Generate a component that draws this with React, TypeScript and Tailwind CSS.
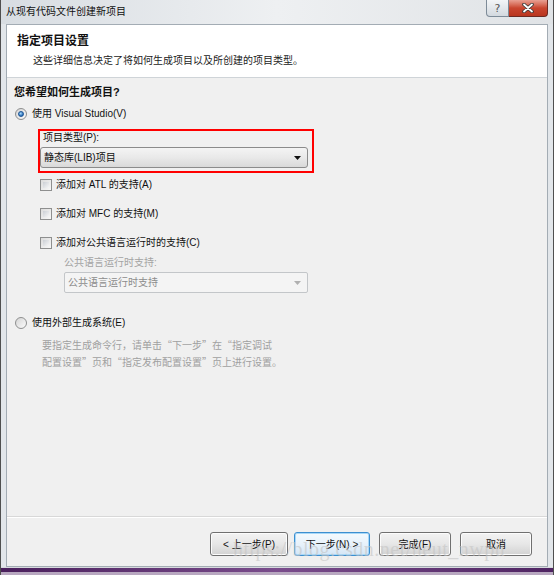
import React from "react";

const font = "font-['Liberation_Sans','Noto_Sans_CJK_SC',sans-serif]";

function Radio({ checked }: { checked?: boolean }) {
  return (
    <span className="w-[12px] h-[12px] rounded-full border border-[#8e8f8f] bg-gradient-to-br from-[#d5d5d5] to-[#fbfbfb] flex items-center justify-center shrink-0">
      {checked && (
        <span className="w-[6px] h-[6px] rounded-full bg-[radial-gradient(circle_at_40%_35%,#a9dcff,#2a6db5_70%)] border border-[#1c5595]" />
      )}
    </span>
  );
}

function Check() {
  return (
    <span className="w-[12px] h-[12px] border border-[#8e8f8f] bg-gradient-to-br from-[#dcdcdc] to-[#f8f8f8] p-[2px] shrink-0">
      <span className="block w-full h-full bg-gradient-to-br from-[#cbcfd5] to-[#f6f6f6]" />
    </span>
  );
}

function Arrow({ color }: { color: string }) {
  return (
    <svg width="7" height="4" viewBox="0 0 7 4">
      <path d="M0 0h7L3.5 4z" fill={color} />
    </svg>
  );
}

function Btn({ w, label, focus }: { w: string; label: string; focus?: boolean }) {
  return (
    <div
      className={`${w} h-[24px] rounded-[3px] border flex items-center justify-center text-[10px] text-[#111] ${
        focus
          ? "border-[#3c8fd0] bg-gradient-to-b from-[#f4fafe] via-[#e8f2fb] to-[#d4e6f6] shadow-[inset_0_0_0_1px_#a8d8f8]"
          : "border-[#707070] bg-gradient-to-b from-[#f3f3f3] via-[#e7e7e7] to-[#d2d2d2] shadow-[inset_0_0_0_1px_#fcfcfc]"
      }`}
    >
      {label}
    </div>
  );
}

export default function App() {
  return (
    <div className={`w-[554px] h-[575px] relative overflow-hidden flex flex-col bg-[#e2e6ea] border-l border-r border-[#4f4f4f] ${font}`}>
      {/* title bar */}
      <div className="h-[24px] flex items-start justify-between pl-[5px] pr-[5px] bg-gradient-to-r from-[#d8dde2] via-[#eef0f2] to-[#e0e3e6]">
        <span className="mt-[5px] text-[10px] leading-[14px] text-[#111]">从现有代码文件创建新项目</span>
        <div className="flex">
          <div className="w-[23px] h-[17px] rounded-bl-[4px] border border-t-0 border-[#7d8b98] bg-gradient-to-b from-[#f3f5f7] to-[#d3d9df] flex items-center justify-center text-[11px] leading-none text-[#555] font-['DejaVu_Sans',sans-serif]">
            ?
          </div>
          <div className="w-[39px] h-[17px] rounded-br-[4px] border border-t-0 border-l-0 border-[#6d2a22] bg-gradient-to-b from-[#e8a093] via-[#c9452f] to-[#b9361f] flex items-center justify-center">
            <svg width="12" height="10" viewBox="0 0 12 10">
              <path d="M2 1.5l8 7M10 1.5l-8 7" stroke="#3b3b3b" strokeWidth="3.6" strokeLinecap="round" />
              <path d="M2 1.5l8 7M10 1.5l-8 7" stroke="#fff" strokeWidth="1.8" strokeLinecap="round" />
            </svg>
          </div>
        </div>
      </div>

      {/* client area */}
      <div className="flex-1 mx-[5px] border border-[#a3acb4] flex flex-col min-h-0">
        {/* header */}
        <div className="h-[53px] bg-white border-b border-[#cfd4d8] pl-[10px] pt-[9px]">
          <div className="text-[12px] font-bold leading-[14px] text-[#111]">指定项目设置</div>
          <div className="ml-[16px] mt-[6px] text-[10px] leading-[14px] text-[#222]">
            这些详细信息决定了将如何生成项目以及所创建的项目类型。
          </div>
        </div>

        {/* body */}
        <div className="flex-1 bg-[#f0f0f0] pl-[7px] text-[10px] leading-[14px] text-[#111]">
          <div className="mt-[7px] font-bold text-[11px]">您希望如何生成项目?</div>

          <div className="mt-[8px] flex items-center gap-[5px] pl-[1px]">
            <Radio checked />
            <span>使用 Visual Studio(V)</span>
          </div>

          <div className="mt-[8px] ml-[24px] w-[276px] border-2 border-[#ff0000] pr-[4px] pb-[3px]">
            <div className="pl-[3px]">项目类型(P):</div>
            <div className="mt-[2px] h-[21px] rounded-[3px] border border-[#8b8b8b] bg-gradient-to-b from-[#f4f4f4] via-[#e9e9e9] to-[#d9d9d9] flex items-center justify-between pl-[3px] pr-[6px]">
              <span>静态库(LIB)项目</span>
              <Arrow color="#111" />
            </div>
          </div>

          <div className="ml-[26px]">
            <div className="mt-[5px] flex items-center gap-[4px]">
              <Check />
              <span>添加对 ATL 的支持(A)</span>
            </div>
            <div className="mt-[15px] flex items-center gap-[4px]">
              <Check />
              <span>添加对 MFC 的支持(M)</span>
            </div>
            <div className="mt-[15px] flex items-center gap-[4px]">
              <Check />
              <span>添加对公共语言运行时的支持(C)</span>
            </div>
            <div className="ml-[24px] mt-[6px] text-[#a3a3a3]">公共语言运行时支持:</div>
            <div className="ml-[24px] mt-[2px] w-[244px] h-[21px] rounded-[2px] border border-[#c3c6c9] bg-[#f4f4f4] flex items-center justify-between pl-[3px] pr-[6px] text-[#8c8c8c]">
              <span>公共语言运行时支持</span>
              <Arrow color="#b0b0b0" />
            </div>
          </div>

          <div className="mt-[23px] flex items-center gap-[5px] pl-[1px]">
            <Radio />
            <span>使用外部生成系统(E)</span>
          </div>

          <div className="mt-[6px] ml-[28px] leading-[17px] text-[#a0a0a0] font-['Noto_Sans_CJK_SC',sans-serif]">
            <div>要指定生成命令行，请单击“下一步”在“指定调试</div>
            <div>配置设置”页和“指定发布配置设置”页上进行设置。</div>
          </div>
        </div>

        {/* footer */}
        <div className="h-px bg-[#d8d8d8]" />
        <div className="h-px bg-white" />
        <div className="h-[48px] bg-[#f0f0f0] flex items-start justify-end pr-[15px] pt-[14px]">
          <Btn w="w-[78px]" label="< 上一步(P)" />
          <div className="ml-[6px]">
            <Btn w="w-[76px]" label="下一步(N) >" focus />
          </div>
          <div className="ml-[9px]">
            <Btn w="w-[72px]" label="完成(F)" />
          </div>
          <div className="ml-[9px]">
            <Btn w="w-[72px]" label="取消" />
          </div>
        </div>
      </div>

      {/* bottom frame */}
      <div className="h-[8px] flex flex-col">
        <div className="h-[1px] bg-[#d6d9dd]" />
        <div className="h-[4px] bg-gradient-to-r from-[#4a1f5c] via-[#7a4c8c] to-[#4f2462]" />
        <div className="flex-1 bg-[#b8a8c0]" />
      </div>

      {/* watermark */}
      <div className="absolute left-[232px] top-[538px] text-[20px] leading-[22px] tracking-[0.5px] text-[#c4c4c4]/60 font-['Liberation_Serif',serif] pointer-events-none">
        https://blog.csdn.net/neut_nwpu
      </div>
    </div>
  );
}
